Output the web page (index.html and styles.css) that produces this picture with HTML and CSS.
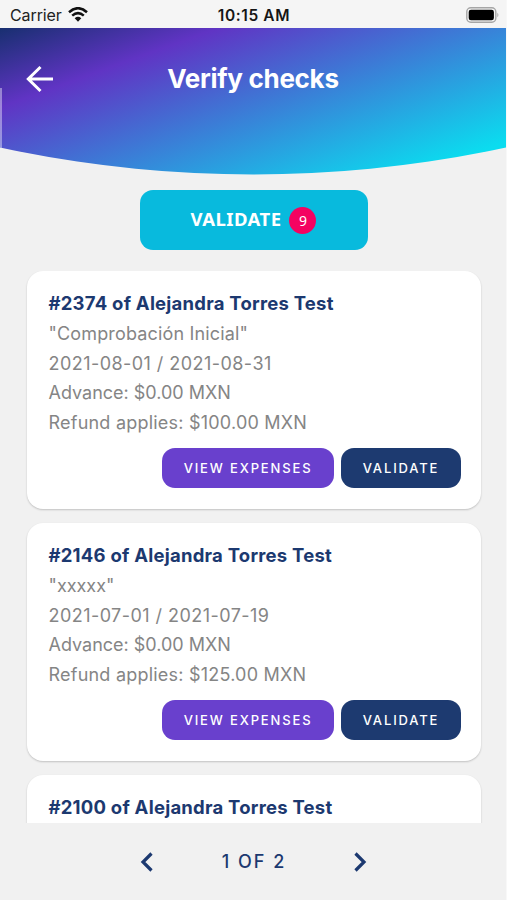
FILE: index.html
```html
<!DOCTYPE html>
<html lang="en">
<head>
<meta charset="utf-8">
<title>Verify checks</title>
<link rel="stylesheet" href="styles.css">
</head>
<body>
<div class="screen">
  <div class="status">
    <div class="carrier"><span>Carrier</span>
      <svg class="wifi" viewBox="0 0 20 15" width="20" height="15"><g fill="none" stroke="#111" stroke-width="2.5"><path d="M1 5.2Q10-2.8 19 5.2"/><path d="M4.2 8.6Q10 3.6 15.8 8.6"/></g><path d="M6.7 11.2Q10 8.5 13.3 11.2L10 14.7Z" fill="#111"/></svg>
    </div>
    <div class="time">10:15 AM</div>
    <svg class="battery" viewBox="0 0 34 16" width="34" height="16"><rect x=".8" y=".8" width="29" height="14.4" rx="4" fill="#f6f6f6" stroke="#a6a6a6" stroke-width="1.4"/><rect x="2.7" y="2.7" width="25.2" height="10.6" rx="2.3" fill="#000"/><path d="M31.4 5.7q2 2.2 0 4.6z" fill="#a6a6a6"/></svg>
  </div>
  <header class="header">
    <svg class="back" viewBox="0 0 28 28" width="28" height="28"><path d="M27 14H2M14.5 2L2.3 14l12.2 12" fill="none" stroke="#fff" stroke-width="3"/></svg>
    <h1>Verify checks</h1>
  </header>
  <button class="primary"><span class="label">VALIDATE</span><span class="count">9</span></button>
  <main class="list">
    <section class="card">
      <h2>#2374 of Alejandra Torres Test</h2>
      <p class="name">"Comprobación Inicial"</p>
      <p class="dates">2021-08-01 / 2021-08-31</p>
      <p>Advance: $0.00 MXN</p>
      <p class="refund">Refund applies: $100.00 MXN</p>
      <div class="actions"><button class="view">VIEW EXPENSES</button><button class="validate">VALIDATE</button></div>
    </section>
    <section class="card">
      <h2>#2146 of Alejandra Torres Test</h2>
      <p>"xxxxx"</p>
      <p class="dates">2021-07-01 / 2021-07-19</p>
      <p>Advance: $0.00 MXN</p>
      <p class="refund">Refund applies: $125.00 MXN</p>
      <div class="actions"><button class="view">VIEW EXPENSES</button><button class="validate">VALIDATE</button></div>
    </section>
    <section class="card">
      <h2>#2100 of Alejandra Torres Test</h2>
    </section>
  </main>
  <footer class="pager">
    <svg viewBox="0 0 14 20" width="14" height="20"><path d="M11.5 1.5L3 10l8.5 8.5" fill="none" stroke="#1c3970" stroke-width="3.2"/></svg>
    <span>1 OF 2</span>
    <svg viewBox="0 0 14 20" width="14" height="20"><path d="M2.5 1.5L11 10l-8.5 8.5" fill="none" stroke="#1c3970" stroke-width="3.2"/></svg>
  </footer>
</div>
</body>
</html>
```
FILE: styles.css
```css
* { box-sizing: border-box; }
body { margin: 0; background: #f1f1f1; font-family: Inter, "Liberation Sans", sans-serif; }
h1, h2, p { margin: 0; white-space: nowrap; }
button { border: 0; padding: 0; font-family: inherit; color: #fff; }
.screen { width: 507px; height: 900px; overflow: hidden; display: flex; flex-direction: column; border-right: 1px solid #f8f8f8; }
.status { height: 28px; flex: none; background: #f5f5f5; display: grid; grid-template-columns: 1fr auto 1fr; align-items: center; padding: 1px 6px 0 10px; color: #222; }
.carrier { display: flex; align-items: center; gap: 6px; font-size: 16px; letter-spacing: -.1px; }
.time { font-size: 15.5px; font-weight: 600; letter-spacing: .6px; color: #151515; margin: 1px 2px 0 0; }
.battery { justify-self: end; }
.header { height: 147px; flex: none; display: grid; grid-template-columns: 28px 1fr 28px; align-items: start; padding: 37px 26px 0;
  background: linear-gradient(#fff6, #fff6) 0 60px / 2px 87px no-repeat, linear-gradient(160deg, #182f70 0%, #6034c4 24%, #0bdcef 90%);
  clip-path: circle(1198px at 253px -1051.5px); }
.header h1 { text-align: center; color: #fff; font-size: 26px; line-height: 28px; font-weight: 650; letter-spacing: -.3px; }
.primary { width: 228px; height: 60px; flex: none; align-self: center; margin: 15px 0 20.5px 1px; border-radius: 13px; background: #08badd; display: flex; align-items: center; justify-content: center; gap: 8px; font-family: "Noto Sans", sans-serif; font-size: 18.5px; font-weight: 700; letter-spacing: .45px; }
.label { margin-top: -3px; }
.count { width: 27px; height: 27px; border-radius: 50%; background: #f40361; font-size: 14px; line-height: 27px; font-weight: 400; letter-spacing: 0; margin-top: 1px; }
.list { height: 552.5px; flex: none; overflow: hidden; padding: 0 25px 0 27px; }
.card { height: 238px; margin-bottom: 14px; padding: 18px 20px 0 21.5px; background: #fff; border-radius: 16px; box-shadow: 0 1px 2px #0003; color: #858585; }
.card h2 { color: #1c3970; font-size: 18.5px; line-height: 29px; margin-bottom: 1.4px; font-weight: 650; letter-spacing: .23px; }
.card p { font-size: 18px; line-height: 29.7px; }
.card .name { letter-spacing: .15px; }
.card .dates { letter-spacing: .45px; }
.card .refund { letter-spacing: .22px; }
.actions { display: flex; justify-content: flex-end; gap: 7px; margin-top: 10px; }
.actions button { height: 40px; border-radius: 13px; font-size: 13px; font-weight: 500; letter-spacing: 1.85px; }
.view { width: 172px; background: #6940cd; }
.validate { width: 120px; background: #1d3a70; }
.pager { flex: 1; display: grid; grid-template-columns: 14px 199px 14px; justify-content: center; align-items: center; text-align: center; color: #1c3970; font-size: 18px; font-weight: 500; letter-spacing: 2px; }
.pager span { padding-left: 2px; }
```
